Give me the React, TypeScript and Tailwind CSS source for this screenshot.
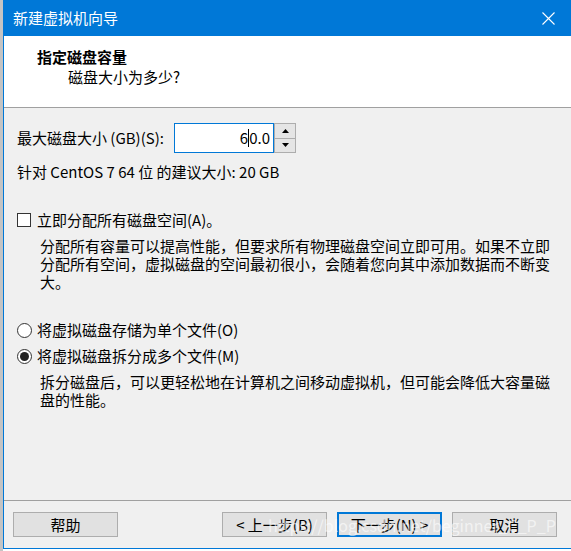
import React from 'react';

const font = { fontFamily: '"Noto Sans CJK SC", "Noto Sans", sans-serif' };

function Button({ label, primary }: { label: string; primary?: boolean }) {
  return (
    <div
      className={
        'flex h-[25px] w-[105px] items-center justify-center bg-[#e1e1e1] text-[15px] leading-[18px] text-black ' +
        (primary ? 'border-2 border-[#0078d7]' : 'border border-[#adadad]')
      }
    >
      {label}
    </div>
  );
}

export default function App() {
  return (
    <div className="flex h-[551px] w-[571px] overflow-hidden bg-white" style={font}>
      {/* left strip of the desktop behind */}
      <div className="h-full w-[3px] bg-[#c4c4c4]" />
      <div className="flex h-[549px] flex-1 flex-col border-b border-l border-[#0078d7] bg-[#f0f0f0]">
        {/* title bar */}
        <div className="flex h-[36px] items-center justify-between bg-[#0078d7] pl-[9px] pr-[16px]">
          <span className="text-[15px] leading-[18px] text-white">新建虚拟机向导</span>
          <svg width="13" height="13" viewBox="0 0 13 13">
            <path d="M0.5 0.5 L12.5 12.5 M12.5 0.5 L0.5 12.5" stroke="white" strokeWidth="1.1" />
          </svg>
        </div>

        {/* header */}
        <div className="flex h-[72px] flex-col border-b border-[#a0a0a0] bg-white pl-[33px] pt-[12px]">
          <span className="text-[15px] font-bold leading-[18px] text-black">指定磁盘容量</span>
          <span className="ml-[31px] mt-[2px] text-[15px] leading-[18px] text-black">磁盘大小为多少?</span>
        </div>

        {/* body */}
        <div className="flex flex-1 flex-col pl-[13px] pt-[15px] text-[15px] leading-[18px] text-black">
          <div className="flex h-[30px] items-center">
            <span className="w-[157px]">最大磁盘大小 (GB)(S):</span>
            <div className="flex h-[30px] w-[100px] items-center justify-end border border-[#0078d7] bg-white pr-[3px]">
              <span>6</span>
              <span className="inline-block h-[18px] w-px bg-black" />
              <span>0.0</span>
            </div>
            <div className="flex h-[30px] w-[22px] flex-col border border-[#adadad] bg-[#f0f0f0]">
              <div className="flex flex-1 items-center justify-center border-b border-[#adadad] bg-[#e5e5e5]">
                <svg width="7" height="4" viewBox="0 0 7 4">
                  <path d="M3.5 0 L7 4 L0 4 Z" fill="black" />
                </svg>
              </div>
              <div className="flex flex-1 items-center justify-center bg-[#e5e5e5]">
                <svg width="7" height="4" viewBox="0 0 7 4">
                  <path d="M0 0 L7 0 L3.5 4 Z" fill="black" />
                </svg>
              </div>
            </div>
          </div>

          <div className="mt-[10px]">针对 CentOS 7 64 位 的建议大小: 20 GB</div>

          <div className="mt-[30px] flex items-center">
            <div className="h-[14px] w-[14px] border border-[#333333] bg-white" />
            <span className="ml-[6px]">立即分配所有磁盘空间(A)。</span>
          </div>
          <div className="ml-[23px] mt-[8px] whitespace-nowrap">
            分配所有容量可以提高性能，但要求所有物理磁盘空间立即可用。如果不立即
            <br />
            分配所有空间，虚拟磁盘的空间最初很小，会随着您向其中添加数据而不断变
            <br />
            大。
          </div>

          <div className="mt-[30px] flex items-center">
            <div className="h-[15px] w-[15px] rounded-full border border-[#333333] bg-white" />
            <span className="ml-[5px]">将虚拟磁盘存储为单个文件(O)</span>
          </div>
          <div className="mt-[8px] flex items-center">
            <div className="flex h-[15px] w-[15px] items-center justify-center rounded-full border border-[#333333] bg-white">
              <div className="h-[9px] w-[9px] rounded-full bg-[#222222]" />
            </div>
            <span className="ml-[5px]">将虚拟磁盘拆分成多个文件(M)</span>
          </div>
          <div className="ml-[23px] mt-[8px] whitespace-nowrap">
            拆分磁盘后，可以更轻松地在计算机之间移动虚拟机，但可能会降低大容量磁
            <br />
            盘的性能。
          </div>
        </div>

        {/* footer */}
        <div className="relative flex h-[48px] items-start border-t border-[#a0a0a0] pl-[9px] pt-[11px]">
          <Button label="帮助" />
          <div className="ml-[104px] flex gap-[10px]">
            <Button label="< 上一步(B)" />
            <Button label="下一步(N) >" primary />
            <Button label="取消" />
          </div>
          <span className="absolute left-[264px] top-[14px] text-[16px] leading-[20px] text-white/60">
            https://blog.csdn.net/beginner_C_P_P
          </span>
        </div>
      </div>
    </div>
  );
}
